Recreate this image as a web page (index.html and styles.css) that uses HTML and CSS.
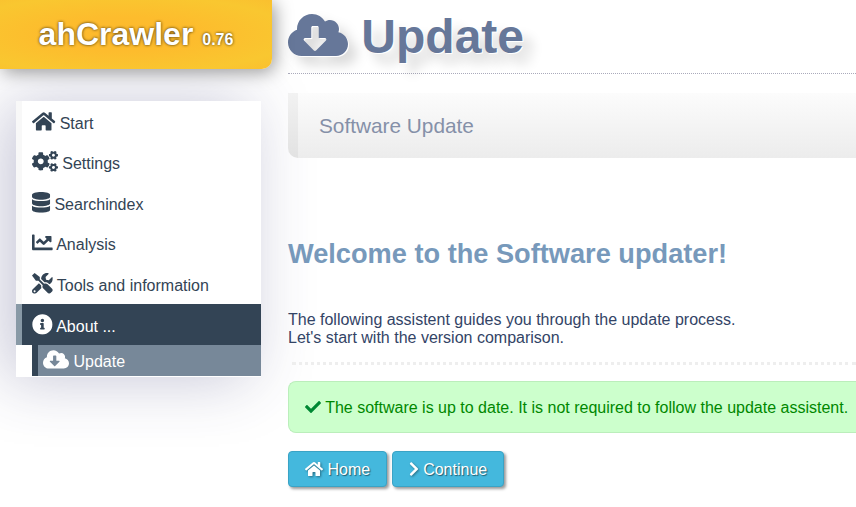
FILE: index.html
```html
<!DOCTYPE html>
<html lang="en">
<head>
<meta charset="utf-8">
<title>ahCrawler - Update</title>
<link rel="stylesheet" href="styles.css">
</head>
<body>
<svg class="defs" width="0" height="0">
  <symbol id="cloud" viewBox="0 0 640 512"><path d="M537.6 226.6c4.1-10.7 6.4-22.4 6.4-34.6 0-53-43-96-96-96-19.7 0-38.1 6-53.3 16.2C367 64.2 315.3 32 256 32c-88.4 0-160 71.6-160 160 0 2.7.1 5.4.2 8.1C40.2 219.8 0 273.2 0 336c0 79.5 64.5 144 144 144h368c70.7 0 128-57.3 128-128 0-61.9-44-113.6-102.4-125.4zm-132.9 88.7L299.3 420.7c-6.2 6.2-16.4 6.2-22.6 0L171.3 315.3c-10.1-10.1-2.9-27.3 11.3-27.3H248V176c0-8.8 7.2-16 16-16h48c8.8 0 16 7.2 16 16v112h65.4c14.2 0 21.4 17.2 11.3 27.3z"/></symbol>
  <symbol id="home" viewBox="0 0 576 512"><path d="M280.37 148.26L96 300.11V464a16 16 0 0 0 16 16l112.06-.29a16 16 0 0 0 15.92-16V368a16 16 0 0 1 16-16h64a16 16 0 0 1 16 16v95.64a16 16 0 0 0 16 16.05L464 480a16 16 0 0 0 16-16V300L295.67 148.26a12.19 12.19 0 0 0-15.3 0zM571.6 251.47L488 182.56V44.05a12 12 0 0 0-12-12h-56a12 12 0 0 0-12 12v72.61L318.47 43a48 48 0 0 0-61 0L4.34 251.47a12 12 0 0 0-1.6 16.9l25.5 31A12 12 0 0 0 45.15 301l235.22-193.74a12.19 12.19 0 0 1 15.3 0L530.9 301a12 12 0 0 0 16.9-1.6l25.5-31a12 12 0 0 0-1.7-16.93z"/></symbol>
  <symbol id="cogs" viewBox="0 0 640 512">
    <path id="cog-small" d="M512.1 191l-8.2 14.3c-3 5.3-9.4 7.5-15.1 5.4-11.8-4.4-22.6-10.7-32.1-18.6-4.6-3.8-5.8-10.5-2.8-15.7l8.2-14.3c-6.9-8-12.3-17.3-15.9-27.4h-16.5c-6 0-11.2-4.3-12.2-10.3-2-12-2.1-24.6 0-37.1 1-6 6.2-10.4 12.2-10.4h16.5c3.6-10.1 9-19.4 15.9-27.4l-8.2-14.3c-3-5.2-1.9-11.9 2.8-15.7 9.5-7.9 20.4-14.2 32.1-18.6 5.7-2.1 12.1.1 15.1 5.4l8.2 14.3c10.5-1.9 21.2-1.9 31.7 0L552 6.3c3-5.3 9.4-7.5 15.1-5.4 11.8 4.4 22.6 10.7 32.1 18.6 4.6 3.8 5.8 10.5 2.8 15.7l-8.2 14.3c6.9 8 12.3 17.3 15.9 27.4h16.5c6 0 11.2 4.3 12.2 10.3 2 12 2.1 24.6 0 37.1-1 6-6.2 10.4-12.2 10.4h-16.5c-3.6 10.1-9 19.4-15.9 27.4l8.2 14.3c3 5.2 1.9 11.9-2.8 15.7-9.5 7.9-20.4 14.2-32.1 18.6-5.7 2.1-12.1-.1-15.1-5.4l-8.2-14.3c-10.4 1.9-21.2 1.9-31.7 0zm-10.5-58.8c38.5 29.6 82.4-14.3 52.8-52.8-38.5-29.7-82.4 14.3-52.8 52.8z"/>
    <use href="#cog-small" y="299"/>
    <path d="M386.3 286.1l33.7 16.8c10.1 5.8 14.5 18.1 10.5 29.1-8.9 24.2-26.4 46.4-42.6 65.8-7.4 8.9-20.2 11.1-30.3 5.3l-29.1-16.8c-16 13.7-34.6 24.6-54.9 31.7v33.6c0 11.6-8.3 21.6-19.7 23.6-24.6 4.2-50.4 4.4-75.9 0-11.5-2-20-11.9-20-23.6V418c-20.3-7.2-38.9-18-54.9-31.7L74 403c-10 5.8-22.9 3.6-30.3-5.3-16.2-19.4-33.3-41.6-42.2-65.7-4-10.9.4-23.2 10.5-29.1l33.3-16.8c-3.9-20.9-3.9-42.4 0-63.4L12 205.8c-10.1-5.8-14.6-18.1-10.5-29 8.9-24.2 26-46.4 42.2-65.8 7.4-8.9 20.2-11.1 30.3-5.3l29.1 16.8c16-13.7 34.6-24.6 54.9-31.7V57.1c0-11.5 8.2-21.5 19.6-23.5 24.6-4.2 50.5-4.4 76-.1 11.5 2 20 11.9 20 23.6v33.6c20.3 7.2 38.9 18 54.9 31.7l29.1-16.8c10-5.8 22.9-3.6 30.3 5.3 16.2 19.4 33.2 41.6 42.1 65.8 4 10.9.1 23.2-10 29.1l-33.7 16.8c3.9 21 3.9 42.5 0 63.5zm-117.6 21.1c59.2-77-28.7-164.9-105.7-105.7-59.2 77 28.7 164.9 105.7 105.7z"/>
  </symbol>
  <symbol id="database" viewBox="0 0 448 512"><path d="M448 73.143v45.714C448 159.143 347.667 192 224 192S0 159.143 0 118.857V73.143C0 32.857 100.333 0 224 0s224 32.857 224 73.143zM448 176v102.857C448 319.143 347.667 352 224 352S0 319.143 0 278.857V176c48.125 33.143 136.208 48.572 224 48.572S399.874 209.143 448 176zm0 160v102.857C448 479.143 347.667 512 224 512S0 479.143 0 438.857V336c48.125 33.143 136.208 48.572 224 48.572S399.874 369.143 448 336z"/></symbol>
  <symbol id="chart" viewBox="0 0 512 512"><path d="M496 384H64V80c0-8.84-7.16-16-16-16H16C7.16 64 0 71.16 0 80v336c0 17.67 14.33 32 32 32h464c8.84 0 16-7.16 16-16v-32c0-8.84-7.16-16-16-16zM464 96H345.94c-21.38 0-32.09 25.85-16.97 40.97l32.4 32.4L288 242.75l-73.37-73.37c-12.5-12.5-32.76-12.5-45.25 0l-68.69 68.69c-6.25 6.25-6.25 16.38 0 22.63l22.62 22.62c6.25 6.25 16.38 6.25 22.63 0L192 237.25l73.37 73.37c12.5 12.5 32.76 12.5 45.25 0l96-96 32.4 32.4c15.12 15.12 40.97 4.41 40.97-16.97V112c.01-8.84-7.15-16-15.99-16z"/></symbol>
  <symbol id="tools" viewBox="0 0 512 512"><path d="M501.1 395.7L384 278.6c-23.1-23.1-57.6-27.6-85.4-13.9L192 158.1V96L64 0 0 64l96 128h62.1l106.6 106.6c-13.6 27.8-9.2 62.3 13.9 85.4l117.1 117.1c14.6 14.6 38.2 14.6 52.7 0l52.7-52.7c14.5-14.6 14.5-38.2 0-52.7zM331.7 225c28.3 0 54.9 11 74.9 31l19.4 19.4c15.8-6.9 30.8-16.5 43.8-29.5 37.1-37.1 49.7-89.3 37.9-136.7-2.2-9-13.5-12.1-20.1-5.5l-74.4 74.4-67.9-11.3L334 98.9l74.4-74.4c6.6-6.6 3.4-17.9-5.7-20.2-47.4-11.7-99.6.9-136.6 37.9-28.5 28.5-41.9 66.1-41.2 103.6l82.1 82.1c8.1-1.9 16.5-2.9 24.7-2.9zm-103.9 82l-56.7-56.7L18.7 402.8c-25 25-25 65.5 0 90.5s65.5 25 90.5 0l123.6-123.6c-7.6-19.9-9.9-41.6-5-62.7zM64 472c-13.2 0-24-10.8-24-24 0-13.3 10.7-24 24-24s24 10.7 24 24c0 13.2-10.7 24-24 24z"/></symbol>
  <symbol id="info" viewBox="0 0 512 512"><path d="M256 8C119.043 8 8 119.083 8 256c0 136.997 111.043 248 248 248s248-111.003 248-248C504 119.083 392.957 8 256 8zm0 110c23.196 0 42 18.804 42 42s-18.804 42-42 42-42-18.804-42-42 18.804-42 42-42zm56 254c0 6.627-5.373 12-12 12h-88c-6.627 0-12-5.373-12-12v-24c0-6.627 5.373-12 12-12h12v-64h-12c-6.627 0-12-5.373-12-12v-24c0-6.627 5.373-12 12-12h64c6.627 0 12 5.373 12 12v100h12c6.627 0 12 5.373 12 12v24z"/></symbol>
  <symbol id="check" viewBox="0 0 512 512"><path d="M173.898 439.404l-166.4-166.4c-9.997-9.997-9.997-26.206 0-36.204l36.203-36.204c9.997-9.998 26.207-9.998 36.204 0L192 312.69 432.095 72.596c9.997-9.997 26.207-9.997 36.204 0l36.203 36.204c9.997 9.997 9.997 26.206 0 36.204l-294.4 294.401c-9.998 9.997-26.207 9.997-36.204-.001z"/></symbol>
  <symbol id="chevron" viewBox="0 0 320 512"><path d="M285.476 272.971L91.132 467.314c-9.373 9.373-24.569 9.373-33.941 0l-22.667-22.667c-9.357-9.357-9.375-24.522-.04-33.901L188.505 256 34.484 101.255c-9.335-9.379-9.317-24.544.04-33.901l22.667-22.667c9.373-9.373 24.569-9.373 33.941 0L285.475 239.03c9.373 9.372 9.373 24.568.001 33.941z"/></symbol>
</svg>
<div class="page">
  <aside class="sidebar">
    <div class="brand">ahCrawler <span class="version">0.76</span></div>
    <nav class="menu">
      <a class="item"><svg class="icon w18"><use href="#home"/></svg> Start</a>
      <a class="item"><svg class="icon w20"><use href="#cogs"/></svg> Settings</a>
      <a class="item"><svg class="icon w14"><use href="#database"/></svg> Searchindex</a>
      <a class="item"><svg class="icon"><use href="#chart"/></svg> Analysis</a>
      <a class="item"><svg class="icon"><use href="#tools"/></svg> Tools and information</a>
      <a class="item active"><svg class="icon"><use href="#info"/></svg> About ...</a>
      <a class="item sub"><svg class="icon w20"><use href="#cloud"/></svg> Update</a>
    </nav>
  </aside>
  <main class="content">
    <h1 class="title"><svg class="icon w20"><use href="#cloud"/></svg> Update</h1>
    <div class="hint">Software Update</div>
    <h3 class="welcome">Welcome to the Software updater!</h3>
    <p class="intro">The following assistent guides you through the update process.<br>Let's start with the version comparison.</p>
    <div class="divider"></div>
    <div class="message"><svg class="icon"><use href="#check"/></svg> The software is up to date. It is not required to follow the update assistent.</div>
    <div class="buttons">
      <a class="button"><svg class="icon w18"><use href="#home"/></svg> Home</a>
      <a class="button"><svg class="icon w10"><use href="#chevron"/></svg> Continue</a>
    </div>
  </main>
</div>
</body>
</html>
```
FILE: styles.css
```css
* { box-sizing: border-box; }
body {
  margin: 0;
  overflow: hidden;
  background: #fff;
  color: #334466;
  font: 16px/18px "Liberation Sans", Arial, sans-serif;
}
.defs { position: absolute; }
.page { display: flex; height: 507px; overflow: hidden; }

.icon { width: 1em; height: 1em; fill: currentColor; vertical-align: -0.125em; overflow: visible; }
.w20 { width: 1.25em; }
.w18 { width: 1.125em; }
.w14 { width: 0.875em; }
.w10 { width: 0.625em; }

.sidebar { flex: 0 0 272px; }
.brand {
  position: relative;
  z-index: 1;
  height: 69px;
  padding-top: 16px;
  border-radius: 0 0 10px 0;
  background: radial-gradient(ellipse at 45% 50%, #fdb92c 0%, #fdbc2d 35%, #f9c730 80%, #fac02f 100%);
  box-shadow: 3px 3px 18px rgba(0, 0, 0, 0.4);
  color: #fff;
  font-size: 32px;
  font-weight: bold;
  line-height: 36px;
  text-align: center;
  text-shadow: 0 0 3px rgba(0, 0, 0, 0.8);
}
.version { font-size: 16px; }

.menu {
  width: 245px;
  margin: 32px 0 0 16px;
  padding-bottom: 1px;
  background: #fff;
  box-shadow: -12px 2px 60px rgba(50, 50, 110, 0.28);
  color: #334455;
}
.item {
  display: block;
  height: 40.6px;
  padding: 9.6px 0 0 9.8px;
  border-left: 6px solid #f8f8f8;
  line-height: 24px;
  white-space: nowrap;
}
.item .icon { font-size: 20.8px; }
.active { background: #334455; border-color: #8899a6; color: #fff; }
.sub {
  height: 31px;
  margin-left: 16px;
  padding: 4px 0 0 5px;
  background: #778899;
  border-color: #334455;
  color: #fff;
}

.content { flex: 1 0 584px; padding-left: 16px; }
.title {
  height: 74px;
  margin: 0;
  padding-top: 10px;
  border-bottom: 1px dotted #aaaabb;
  color: #667799;
  font-size: 48px;
  line-height: 54px;
  text-shadow: 1px 1px 0 #fff, 10px 10px 12px rgba(0, 0, 0, 0.16);
}
.title .icon { filter: drop-shadow(1px 1px 0 #fff) drop-shadow(8px 8px 6px rgba(0, 0, 0, 0.14)); }
.hint {
  height: 65px;
  margin: 19px 0 79px;
  padding: 21px;
  border-left: 10px solid rgba(0, 0, 0, 0.04);
  border-radius: 0 0 0 10px;
  background: linear-gradient(#fcfcfc, #ececec) border-box;
  color: #8590a8;
  font-size: 20.8px;
  line-height: 24px;
}
.welcome { margin: 0; padding-top: 1px; color: #7799bb; font-size: 27.2px; line-height: 32px; }
.intro { margin: 41px 0 15px; }
.divider { margin-left: 4px; border-top: 3px dotted #eee; }
.message {
  height: 52px;
  margin: 16px 0 18px;
  padding: 17px 0 0 16px;
  border: 1px solid #bbeebb;
  border-right: 0;
  border-radius: 8px 0 0 8px;
  background: #ccffcc;
  color: #008800;
  white-space: nowrap;
}
.message .icon { color: #008833; }
.buttons { display: flex; gap: 5px; }
.button {
  height: 36px;
  padding: 9px 15.6px 0 16px;
  border: 1px solid #3aa3c5;
  border-radius: 4px;
  background: #44b8dd;
  box-shadow: 2px 2px 3px rgba(0, 0, 0, 0.4);
  color: #fff;
  text-shadow: 1px 1px 1px rgba(0, 0, 0, 0.5);
}
.button .icon { filter: drop-shadow(1px 1px 1px rgba(0, 0, 0, 0.4)); }
```
